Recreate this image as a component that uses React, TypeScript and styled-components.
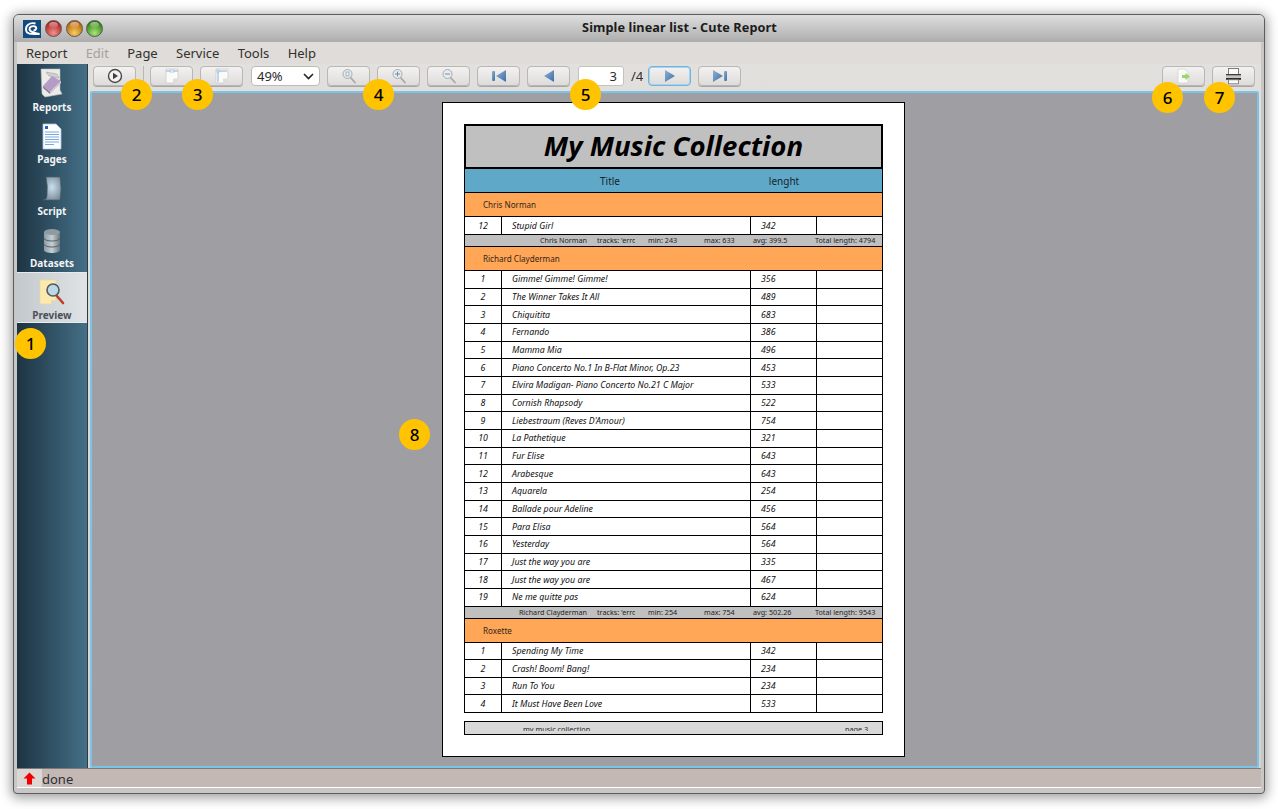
import styled, {createGlobalStyle} from "styled-components";
import {FC, ReactNode} from "react";

const FONT = `"Noto Sans", "Open Sans", sans-serif`;

const Global = createGlobalStyle`
  html, body {
    margin: 0;
    padding: 0;
    background: #fff;
    font-family: ${FONT};
  }
  * {
    box-sizing: border-box;
  }
`;

const Screen = styled.div`
  width: 1278px;
  height: 809px;
  padding: 14px 13px 15px 13px;
  overflow: hidden;
`;

const Window = styled.div`
  position: relative;
  height: 780px;
  border: 1px solid #5d5d5d;
  border-radius: 6px 6px 4px 4px;
  background: #c9c7c5;
  box-shadow: 0 2px 12px 2px rgba(0, 0, 0, 0.38);
  display: flex;
  flex-direction: column;
`;

const TitleBar = styled.div`
  height: 27px;
  flex: none;
  display: flex;
  align-items: center;
  padding: 0 0 0 9px;
  position: relative;
  border-radius: 5px 5px 0 0;
  background: linear-gradient(#dedede, #adadad);
`;

const TitleText = styled.div`
  position: absolute;
  left: 81px;
  right: 0;
  top: 3px;
  text-align: center;
  font-size: 12.7px;
  font-weight: 700;
  color: #1c1c1c;
  letter-spacing: 0.1px;
`;

const Lights = styled.div`
  display: flex;
  gap: 3.5px;
  margin-left: 4px;
`;

const Light = styled.div<{ $c1: string; $c2: string }>`
  position: relative;
  width: 17px;
  height: 17px;
  border-radius: 50%;
  border: 1px solid #5a5a5a;
  background: radial-gradient(circle at 50% 80%, ${p => p.$c1} 0%, ${p => p.$c2} 80%);

  &::before {
    content: "";
    position: absolute;
    left: 3px;
    right: 3px;
    top: 1px;
    height: 6px;
    border-radius: 50%;
    background: linear-gradient(rgba(255, 255, 255, 0.55), rgba(255, 255, 255, 0.05));
  }
`;

const Body = styled.div`
  flex: 1;
  min-height: 0;
  margin: 0 3px 5px 3px;
  display: flex;
  flex-direction: column;
`;

const MenuBar = styled.div`
  height: 22px;
  flex: none;
  display: flex;
  align-items: center;
  padding-left: 9px;
  gap: 18.3px;
  background: #dfdcd9;
  font-size: 13px;
  color: #33302e;
`;

const MenuItem = styled.span<{ $disabled?: boolean }>`
  color: ${p => (p.$disabled ? "#a5a29f" : "#33302e")};
`;

const Main = styled.div`
  flex: 1;
  min-height: 0;
  display: flex;
`;

const Sidebar = styled.div`
  width: 71px;
  flex: none;
  border-right: 1px solid #2c3a42;
  background: linear-gradient(90deg, #1d3442, #446f87);
`;

const SideItem = styled.div<{ $active?: boolean }>`
  height: ${p => (p.$active ? "51px" : "52px")};
  display: flex;
  flex-direction: column;
  align-items: center;
  justify-content: flex-end;
  padding-bottom: ${p => (p.$active ? "0" : "2px")};
  font-size: 10px;
  font-weight: 700;
  color: ${p => (p.$active ? "#4a4f58" : "#f2f4f5")};
  background: ${p => (p.$active ? "linear-gradient(90deg, #c3c9cd, #dfe3e6)" : "transparent")};
  border-top: ${p => (p.$active ? "1px solid #e8eaec" : "none")};
  border-bottom: ${p => (p.$active ? "1px solid #e8eaec" : "none")};

  svg {
    display: block;
    margin-bottom: 2px;
  }
`;

const Content = styled.div`
  flex: 1;
  min-width: 0;
  display: flex;
  flex-direction: column;
  background: linear-gradient(#e2e0dd, #d5d3d0);
`;

const Toolbar = styled.div`
  height: 27px;
  flex: none;
  display: flex;
  align-items: flex-start;
  padding: 2px 6px 0 5px;
  gap: 7px;
`;

const ToolButton = styled.div<{ $focus?: boolean }>`
  width: 43px;
  height: 20px;
  flex: none;
  border-radius: 4px;
  display: flex;
  align-items: center;
  justify-content: center;
  border: 1px solid ${p => (p.$focus ? "#6fb4dc" : "#b9b6b3")};
  background: linear-gradient(#f3f2f1, #dedcda);
  box-shadow: ${p => (p.$focus ? "0 0 0 1px #a9d3ec inset" : "0 1px 0 #a8a6a3")};
`;

const Separator = styled.div`
  width: 1px;
  height: 20px;
  flex: none;
  margin-right: -1px;
  background: #b8b5b2;
`;

const Combo = styled.div`
  width: 69px;
  height: 20px;
  flex: none;
  margin-left: 1px;
  border: 1px solid #bcb9b6;
  border-radius: 4px;
  background: #fff;
  display: flex;
  align-items: center;
  justify-content: space-between;
  padding: 0 5px;
  font-size: 13px;
  color: #2c2c2c;
`;

const PageInput = styled.div`
  width: 46px;
  height: 20px;
  flex: none;
  margin-left: 1px;
  border: 1px solid #c4c1be;
  border-radius: 3px;
  background: #fff;
  text-align: right;
  padding-right: 6px;
  font-size: 13px;
  line-height: 18px;
  color: #2c2c2c;
`;

const PageTotal = styled.span`
  width: 12px;
  font-size: 13px;
  line-height: 20px;
  color: #33302e;
  margin-right: -2px;
`;

const Spacer = styled.div`
  flex: 1;
`;

const Canvas = styled.div`
  flex: 1;
  min-height: 0;
  margin: 0 2px 0 2px;
  border: 2px solid #7cc3e8;
  border-radius: 2px;
  background: #9f9ea3;
  display: flex;
  justify-content: center;
  align-items: flex-start;
  padding: 9px 2px 0 0;
`;

const Page = styled.div`
  width: 463px;
  height: 655px;
  flex: none;
  border: 1px solid #000;
  background: #fff;
  padding: 21px 21px 0 21px;
  color: #111;
`;

const ReportTitle = styled.div`
  height: 45px;
  padding-bottom: 4px;
  border: 2px solid #000;
  background: #c0c0c0;
  display: flex;
  align-items: center;
  justify-content: center;
  font-size: 27.6px;
  font-weight: 700;
  font-style: italic;
  color: #000;
`;

const HeaderRow = styled.div`
  height: 24px;
  border: 1px solid #000;
  border-top: none;
  background: #5fa8c8;
  display: grid;
  grid-template-columns: 290px 58px;
  align-items: center;
  font-size: 10px;
  color: #14242e;

  span {
    text-align: center;
  }
`;

const GroupRow = styled.div<{ $h: number }>`
  height: ${p => p.$h}px;
  border: 1px solid #000;
  border-top: none;
  background: #ffa756;
  display: flex;
  align-items: center;
  padding-left: 18px;
  font-size: 8.1px;
  color: #33241a;
`;

const DataRow = styled.div<{ $h: number }>`
  height: ${p => p.$h}px;
  border: 1px solid #000;
  border-top: none;
  display: grid;
  grid-template-columns: 36px 249px 66px 1fr;
  font-size: 8.8px;
  font-style: italic;
  color: #111;
`;

const Cell = styled.div<{ $center?: boolean; $pad?: number }>`
  border-left: 1px solid #000;
  display: flex;
  align-items: center;
  justify-content: ${p => (p.$center ? "center" : "flex-start")};
  padding-left: ${p => p.$pad ?? 0}px;
  white-space: nowrap;

  &:first-child {
    border-left: none;
  }
`;

const SummaryRow = styled.div`
  height: 12px;
  border: 1px solid #000;
  border-top: none;
  background: #c0c0c0;
  display: grid;
  grid-template-columns: 122px 10px 51px 56px 49px 62px 1fr;
  align-items: center;
  font-size: 7.2px;
  line-height: 11px;
  color: #232328;
  white-space: nowrap;
`;

const SummaryName = styled.span`
  text-align: right;
`;

const Clip = styled.span`
  display: block;
  width: 38px;
  overflow: hidden;
`;

const PageFooter = styled.div`
  margin-top: 8px;
  height: 14px;
  border: 1px solid #000;
  background: #d8d8d8;
  display: grid;
  grid-template-columns: 58px 322px 1fr;
  font-size: 7.3px;
  color: #25252b;
`;

const FooterText = styled.span`
  display: block;
  height: 9px;
  line-height: 15px;
  overflow: hidden;
`;

const StatusBar = styled.div`
  height: 20px;
  flex: none;
  display: flex;
  align-items: stretch;
  background: #c3b8b4;
  border-top: 1px solid #7d7a78;
  border-bottom: 1px solid #fff;
  font-size: 13px;
  color: #2e2e33;
`;

const StatusIcon = styled.div`
  width: 25px;
  display: flex;
  align-items: center;
  justify-content: center;
  background: #dbd7d4;
`;

const StatusText = styled.div`
  line-height: 20px;
`;

const Badge = styled.div<{ $x: number; $y: number }>`
  position: absolute;
  left: ${p => p.$x}px;
  top: ${p => p.$y}px;
  width: 31px;
  height: 31px;
  border-radius: 50%;
  background: #ffc300;
  color: #000;
  display: flex;
  align-items: center;
  justify-content: center;
  font-size: 17px;
  font-weight: 500;
`;

// ---- icons

const Play = () => (
    <svg width="16" height="16" viewBox="0 0 16 16">
        <circle cx="8" cy="8" r="6.5" fill="#f2f2f2" stroke="#4a4a4a" strokeWidth="1.4"/>
        <path d="M6 4.8 L11 8 L6 11.2 Z" fill="#3f3f3f"/>
    </svg>
);

const PageIcon: FC<{ side?: boolean }> = ({side}) => (
    <svg width="14" height="16" viewBox="0 0 14 16">
        <path d="M1 1 H13 V10.5 L8 15 H1 Z" fill="#fafaf8" stroke="#c8c8c6" strokeWidth="0.7"/>
        <path d="M13 10.5 H8 V15 Z" fill="#dededc"/>
        {side ? (
            <path d="M3 2 V14 M3 3 H12" stroke="#6f9fd6" strokeWidth="0.8" fill="none"/>
        ) : (
            <path d="M1 3 H5 M9 3 H13" stroke="#6f9fd6" strokeWidth="0.8" fill="none"/>
        )}
        <rect x={side ? 2 : 5} y="2" width={side ? 2 : 4} height="2" fill="#fff" stroke="#6f9fd6" strokeWidth="0.5"/>
    </svg>
);

const Zoom: FC<{ mark: "fit" | "plus" | "minus" }> = ({mark}) => (
    <svg width="16" height="16" viewBox="0 0 16 16">
        <path d="M9.5 9.5 L14 14.5" stroke="#a7a6a4" strokeWidth="1.7" strokeLinecap="round"/>
        <circle cx="6.5" cy="6" r="4.5" fill="#e4ecf1" stroke="#a5adb2" strokeWidth="1"/>
        {mark === "fit" && <rect x="5" y="4" width="3" height="4" fill="none" stroke="#98a2a8" strokeWidth="0.7"/>}
        {mark !== "fit" && <path d="M4 6 H9" stroke="#7f8a90" strokeWidth="1"/>}
        {mark === "plus" && <path d="M6.5 3.5 V8.5" stroke="#7f8a90" strokeWidth="1"/>}
    </svg>
);

const Nav: FC<{ kind: "first" | "prev" | "next" | "last" }> = ({kind}) => {
    const left = kind === "first" || kind === "prev";
    return (
        <svg width="16" height="14" viewBox="0 0 16 14">
            <defs>
                <linearGradient id={`nav-${kind}`} x1="0" y1="0" x2="1" y2="1">
                    <stop offset="0" stopColor="#8fb1d4"/>
                    <stop offset="1" stopColor="#3c6ea4"/>
                </linearGradient>
            </defs>
            {kind === "first" && <rect x="1" y="2" width="3" height="10" rx="1" fill={`url(#nav-${kind})`}/>}
            {kind === "last" && <rect x="12" y="2" width="3" height="10" rx="1" fill={`url(#nav-${kind})`}/>}
            {left ? (
                <path d={kind === "first" ? "M15 1 V13 L5 7 Z" : "M13 1 V13 L3 7 Z"} fill={`url(#nav-${kind})`}/>
            ) : (
                <path d={kind === "last" ? "M1 1 V13 L11 7 Z" : "M3 1 V13 L13 7 Z"} fill={`url(#nav-${kind})`}/>
            )}
        </svg>
    );
};

const ExportIcon = () => (
    <svg width="14" height="16" viewBox="0 0 14 16">
        <path d="M1 1 H8 L11 4 V15 H1 Z" fill="#fafaf8" stroke="#d0d0ce" strokeWidth="0.7"/>
        <path d="M5 7 H8.5 V5 L13 8.5 L8.5 12 V10 H5 Z" fill="#9bd66a"/>
    </svg>
);

const PrintIcon = () => (
    <svg width="17" height="17" viewBox="0 0 17 17">
        <rect x="3.5" y="0.5" width="10" height="6" fill="#fafafa" stroke="#6e6e6e" strokeWidth="0.9"/>
        <rect x="1" y="6" width="15" height="1.6" fill="#3e3e3e"/>
        <rect x="1" y="7.6" width="15" height="2.4" fill="#c4c4c4"/>
        <rect x="1" y="10" width="15" height="1.8" fill="#2e2e2e"/>
        <rect x="3.5" y="11.8" width="10" height="4" fill="#fafafa" stroke="#6e6e6e" strokeWidth="0.8"/>
    </svg>
);

const ReportsIcon = () => (
    <svg width="24" height="30" viewBox="0 0 24 30">
        <path d="M1 1 H20 V22 L22 26 L5 29 L2 26 Z" fill="#ecebe8" stroke="#b8b8b8" strokeWidth="0.6"/>
        <path d="M3 18 L12 8 L21 13 L10 24 Z" fill="#b49dc4"/>
        <path d="M3 18 L10 24 V26 L3 20 Z" fill="#8a7699"/>
        <path d="M10 24 L21 13 V15 L10 26 Z" fill="#d0c2d8"/>
        <path d="M6 4 L17 6 L19 10 L9 8 Z" fill="#cfcfd0" stroke="#9a9a9a" strokeWidth="0.5"/>
    </svg>
);

const PagesIcon = () => (
    <svg width="20" height="27" viewBox="0 0 20 27">
        <path d="M1 1 H14 L19 6 V26 H1 Z" fill="#fbfdff" stroke="#a9c5e2" strokeWidth="0.8"/>
        <rect x="3" y="3" width="3" height="3" fill="#2563b8"/>
        <path d="M3 9 H17 M3 11.5 H17 M3 14 H17 M3 16.5 H17 M3 19 H17 M3 21.5 H12" stroke="#7da9d8" strokeWidth="1.1"/>
    </svg>
);

const ScriptIcon = () => (
    <svg width="20" height="26" viewBox="0 0 20 26">
        <defs>
            <radialGradient id="script-fill" cx="0.5" cy="0.45" r="0.6">
                <stop offset="0" stopColor="#c9dff0"/>
                <stop offset="1" stopColor="#7f8f9b"/>
            </radialGradient>
        </defs>
        <path d="M4 1 H18 Q20 13 18 24 H1 Q5 24 5 20 Q6 10 4 1 Z" fill="url(#script-fill)" stroke="#4d5b64" strokeWidth="0.7"/>
    </svg>
);

const DatasetsIcon = () => (
    <svg width="18" height="26" viewBox="0 0 18 26">
        <defs>
            <linearGradient id="db-fill" x1="0" y1="0" x2="1" y2="0">
                <stop offset="0" stopColor="#8d9ca3"/>
                <stop offset="0.5" stopColor="#c5d0d4"/>
                <stop offset="1" stopColor="#6b787e"/>
            </linearGradient>
        </defs>
        <path d="M1 4 V22 C1 26 17 26 17 22 V4 Z" fill="url(#db-fill)"/>
        <ellipse cx="9" cy="4" rx="8" ry="3" fill="#8e9ba1"/>
        <path d="M1 10 C1 14 17 14 17 10 M1 16 C1 20 17 20 17 16" stroke="#55636a" strokeWidth="1" fill="none"/>
    </svg>
);

const PreviewIcon = () => (
    <svg width="28" height="27" viewBox="0 0 28 27">
        <path d="M2 1 H18 V21 L13 25 H2 Z" fill="#fbe9ad" stroke="#e8d9a8" strokeWidth="0.7"/>
        <path d="M18 21 H13 V25 Z" fill="#e6d7b8"/>
        <path d="M18 16 L25 24" stroke="#c33c22" strokeWidth="2.6" strokeLinecap="round"/>
        <circle cx="15" cy="11" r="6" fill="#bcd7e6" stroke="#4f5a62" strokeWidth="1.6"/>
    </svg>
);

const Logo = () => (
    <svg width="18" height="18" viewBox="0 0 18 18">
        <rect width="18" height="18" fill="#134a7c"/>
        <path d="M12.5 3.5 C6 2 2.5 6 3 10 C3.5 14 7 14.5 16.5 14 C11 12.5 7 12.5 6.5 9.5 C6.2 7 9 5.5 12 6.5 C14.5 7.5 13 10.5 10.5 10.5" fill="none" stroke="#fff" strokeWidth="1.9"/>
    </svg>
);

const StatusArrow = () => (
    <svg width="13" height="13" viewBox="0 0 13 13">
        <path d="M6.5 0.5 L12.5 6.5 H9 V12.5 H4 V6.5 H0.5 Z" fill="#f00000"/>
    </svg>
);

const Chevron = () => (
    <svg width="11" height="7" viewBox="0 0 11 7">
        <path d="M1 1 L5.5 5.5 L10 1" fill="none" stroke="#222" strokeWidth="1.6"/>
    </svg>
);

// ---- report data

type Song = [number, string, number];

const CLAYDERMAN: Song[] = [
    [1, "Gimme! Gimme! Gimme!", 356],
    [2, "The Winner Takes It All", 489],
    [3, "Chiquitita", 683],
    [4, "Fernando", 386],
    [5, "Mamma Mia", 496],
    [6, "Piano Concerto No.1 In B-Flat Minor, Op.23", 453],
    [7, "Elvira Madigan- Piano Concerto No.21 C Major", 533],
    [8, "Cornish Rhapsody", 522],
    [9, "Liebestraum (Reves D'Amour)", 754],
    [10, "La Pathetique", 321],
    [11, "Fur Elise", 643],
    [12, "Arabesque", 643],
    [13, "Aquarela", 254],
    [14, "Ballade pour Adeline", 456],
    [15, "Para Elisa", 564],
    [16, "Yesterday", 564],
    [17, "Just the way you are", 335],
    [18, "Just the way you are", 467],
    [19, "Ne me quitte pas", 624],
];

const ROXETTE: Song[] = [
    [1, "Spending My Time", 342],
    [2, "Crash! Boom! Bang!", 234],
    [3, "Run To You", 234],
    [4, "It Must Have Been Love", 533],
];

const Songs: FC<{ songs: Song[]; h: number }> = ({songs, h}) => (
    <>
        {songs.map(([n, title, len]) => (
            <DataRow key={n} $h={h}>
                <Cell $center>{n}</Cell>
                <Cell $pad={10}>{title}</Cell>
                <Cell $pad={10}>{len}</Cell>
                <Cell/>
            </DataRow>
        ))}
    </>
);

const Summary: FC<{ name: string; min: number; max: number; avg: string; total: number }> = ({name, min, max, avg, total}) => (
    <SummaryRow>
        <SummaryName>{name}</SummaryName>
        <span/>
        <Clip>tracks: 'error</Clip>
        <span>min: {min}</span>
        <span>max: {max}</span>
        <span>avg: {avg}</span>
        <span>Total length: {total}</span>
    </SummaryRow>
);

const SideEntry: FC<{ label: string; active?: boolean; children: ReactNode }> = ({label, active, children}) => (
    <SideItem $active={active}>
        {children}
        {label}
    </SideItem>
);

const BADGES: [string, number, number][] = [
    ["1", 1, 313],
    ["2", 107, 64],
    ["3", 168, 64],
    ["4", 349, 64],
    ["5", 556, 64],
    ["6", 1138, 67],
    ["7", 1190, 67],
    ["8", 385, 404],
];

const App = () => {
    return (
        <Screen>
            <Global/>
            <Window>
                <TitleBar>
                    <TitleText>Simple linear list - Cute Report</TitleText>
                    <Logo/>
                    <Lights>
                        <Light $c1="#f4908c" $c2="#a81a1a"/>
                        <Light $c1="#f6cf5a" $c2="#b55a08"/>
                        <Light $c1="#a8e878" $c2="#2c7a10"/>
                    </Lights>
                </TitleBar>
                <Body>
                    <MenuBar>
                        <MenuItem>Report</MenuItem>
                        <MenuItem $disabled>Edit</MenuItem>
                        <MenuItem>Page</MenuItem>
                        <MenuItem>Service</MenuItem>
                        <MenuItem>Tools</MenuItem>
                        <MenuItem>Help</MenuItem>
                    </MenuBar>
                    <Main>
                        <Sidebar>
                            <SideEntry label="Reports"><ReportsIcon/></SideEntry>
                            <SideEntry label="Pages"><PagesIcon/></SideEntry>
                            <SideEntry label="Script"><ScriptIcon/></SideEntry>
                            <SideEntry label="Datasets"><DatasetsIcon/></SideEntry>
                            <SideEntry label="Preview" active><PreviewIcon/></SideEntry>
                        </Sidebar>
                        <Content>
                            <Toolbar>
                                <ToolButton><Play/></ToolButton>
                                <Separator/>
                                <ToolButton><PageIcon/></ToolButton>
                                <ToolButton><PageIcon side/></ToolButton>
                                <Combo>49%<Chevron/></Combo>
                                <ToolButton><Zoom mark="fit"/></ToolButton>
                                <ToolButton><Zoom mark="plus"/></ToolButton>
                                <ToolButton><Zoom mark="minus"/></ToolButton>
                                <ToolButton><Nav kind="first"/></ToolButton>
                                <ToolButton><Nav kind="prev"/></ToolButton>
                                <PageInput>3</PageInput>
                                <PageTotal>/4</PageTotal>
                                <ToolButton $focus><Nav kind="next"/></ToolButton>
                                <ToolButton><Nav kind="last"/></ToolButton>
                                <Spacer/>
                                <ToolButton><ExportIcon/></ToolButton>
                                <ToolButton><PrintIcon/></ToolButton>
                            </Toolbar>
                            <Canvas>
                                <Page>
                                    <ReportTitle>My Music Collection</ReportTitle>
                                    <HeaderRow>
                                        <span>Title</span>
                                        <span>lenght</span>
                                    </HeaderRow>
                                    <GroupRow $h={24}>Chris Norman</GroupRow>
                                    <Songs songs={[[12, "Stupid Girl", 342]]} h={18}/>
                                    <Summary name="Chris Norman" min={243} max={633} avg="399.5" total={4794}/>
                                    <GroupRow $h={24}>Richard Clayderman</GroupRow>
                                    <Songs songs={CLAYDERMAN} h={17.68}/>
                                    <Summary name="Richard Clayderman" min={254} max={754} avg="502.26" total={9543}/>
                                    <GroupRow $h={24}>Roxette</GroupRow>
                                    <Songs songs={ROXETTE} h={17.5}/>
                                    <PageFooter>
                                        <span/>
                                        <FooterText>my music collection</FooterText>
                                        <FooterText>page 3</FooterText>
                                    </PageFooter>
                                </Page>
                            </Canvas>
                        </Content>
                    </Main>
                    <StatusBar>
                        <StatusIcon><StatusArrow/></StatusIcon>
                        <StatusText>done</StatusText>
                    </StatusBar>
                </Body>
                {BADGES.map(([n, x, y]) => (
                    <Badge key={n} $x={x} $y={y}>{n}</Badge>
                ))}
            </Window>
        </Screen>
    );
};

export default App;
